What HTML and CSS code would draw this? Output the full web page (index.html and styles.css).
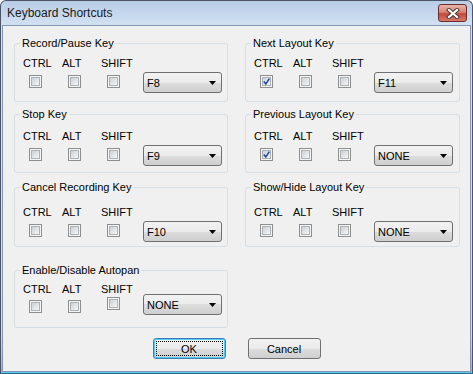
FILE: index.html
```html
<!DOCTYPE html>
<html lang="en">
<head>
    <meta charset="UTF-8">
    <title>Keyboard Shortcuts</title>
    <link rel="stylesheet" href="styles.css">
</head>
<body>
    <div class="window">
        <div class="titlebar">
            <span class="title">Keyboard Shortcuts</span>
            <div class="close">
                <svg width="14" height="11" viewBox="0 0 14 11">
                    <path d="M3 2 L11 9 M11 2 L3 9" stroke="#4d3a3a" stroke-width="4.2" stroke-linecap="square" fill="none"/>
                    <path d="M3 2 L11 9 M11 2 L3 9" stroke="#ffffff" stroke-width="2.2" stroke-linecap="square" fill="none"/>
                </svg>
            </div>
        </div>

        <div class="client">
            <div class="groups">
                <fieldset class="group">
                    <legend>Record/Pause Key</legend>
                    <div class="row">
                        <div class="key"><span>CTRL</span><span class="box"><span class="fill"></span></span></div>
                        <div class="key"><span>ALT</span><span class="box"><span class="fill"></span></span></div>
                        <div class="key"><span>SHIFT</span><span class="box"><span class="fill"></span></span></div>
                        <div class="select"><span>F8</span><svg width="7" height="4"><polygon points="0,0 7,0 3.5,4" fill="#000"/></svg></div>
                    </div>
                </fieldset>

                <fieldset class="group">
                    <legend>Next Layout Key</legend>
                    <div class="row">
                        <div class="key"><span>CTRL</span><span class="box"><span class="fill checked"><svg width="7" height="7"><path d="M0.8 3.6 L2.8 6 L6.4 0.6" stroke="#2c4a9a" stroke-width="1.6" fill="none"/></svg></span></span></div>
                        <div class="key"><span>ALT</span><span class="box"><span class="fill"></span></span></div>
                        <div class="key"><span>SHIFT</span><span class="box"><span class="fill"></span></span></div>
                        <div class="select"><span>F11</span><svg width="7" height="4"><polygon points="0,0 7,0 3.5,4" fill="#000"/></svg></div>
                    </div>
                </fieldset>

                <fieldset class="group second">
                    <legend>Stop Key</legend>
                    <div class="row">
                        <div class="key"><span>CTRL</span><span class="box"><span class="fill"></span></span></div>
                        <div class="key"><span>ALT</span><span class="box"><span class="fill"></span></span></div>
                        <div class="key"><span>SHIFT</span><span class="box"><span class="fill"></span></span></div>
                        <div class="select"><span>F9</span><svg width="7" height="4"><polygon points="0,0 7,0 3.5,4" fill="#000"/></svg></div>
                    </div>
                </fieldset>

                <fieldset class="group second">
                    <legend>Previous Layout Key</legend>
                    <div class="row">
                        <div class="key"><span>CTRL</span><span class="box"><span class="fill checked"><svg width="7" height="7"><path d="M0.8 3.6 L2.8 6 L6.4 0.6" stroke="#2c4a9a" stroke-width="1.6" fill="none"/></svg></span></span></div>
                        <div class="key"><span>ALT</span><span class="box"><span class="fill"></span></span></div>
                        <div class="key"><span>SHIFT</span><span class="box"><span class="fill"></span></span></div>
                        <div class="select"><span>NONE</span><svg width="7" height="4"><polygon points="0,0 7,0 3.5,4" fill="#000"/></svg></div>
                    </div>
                </fieldset>

                <fieldset class="group third">
                    <legend>Cancel Recording Key</legend>
                    <div class="row">
                        <div class="key"><span>CTRL</span><span class="box"><span class="fill"></span></span></div>
                        <div class="key"><span>ALT</span><span class="box"><span class="fill"></span></span></div>
                        <div class="key"><span>SHIFT</span><span class="box"><span class="fill"></span></span></div>
                        <div class="select"><span>F10</span><svg width="7" height="4"><polygon points="0,0 7,0 3.5,4" fill="#000"/></svg></div>
                    </div>
                </fieldset>

                <fieldset class="group third">
                    <legend>Show/Hide Layout Key</legend>
                    <div class="row">
                        <div class="key"><span>CTRL</span><span class="box"><span class="fill"></span></span></div>
                        <div class="key"><span>ALT</span><span class="box"><span class="fill"></span></span></div>
                        <div class="key"><span>SHIFT</span><span class="box"><span class="fill"></span></span></div>
                        <div class="select"><span>NONE</span><svg width="7" height="4"><polygon points="0,0 7,0 3.5,4" fill="#000"/></svg></div>
                    </div>
                </fieldset>

                <fieldset class="group fourth">
                    <legend>Enable/Disable Autopan</legend>
                    <div class="row">
                        <div class="key"><span>CTRL</span><span class="box"><span class="fill"></span></span></div>
                        <div class="key"><span>ALT</span><span class="box"><span class="fill"></span></span></div>
                        <div class="key"><span>SHIFT</span><span class="box up"><span class="fill"></span></span></div>
                        <div class="select"><span>NONE</span><svg width="7" height="4"><polygon points="0,0 7,0 3.5,4" fill="#000"/></svg></div>
                    </div>
                </fieldset>
            </div>

            <div class="buttons">
                <div class="btn default"><span>OK</span></div>
                <div class="btn"><span>Cancel</span></div>
            </div>
        </div>
    </div>
</body>
</html>
```

FILE: styles.css
```css
body {
    margin: 0;
    font-family: "Liberation Sans", Arial, sans-serif;
    font-size: 11px;
    color: #000;
}
.window {
    width: 473px;
    height: 374px;
    box-sizing: border-box;
    border: 1px solid #4b5566;
    border-bottom-color: #2f6d8c;
    border-radius: 6px 6px 0 0;
    background: linear-gradient(#b8cde7, #d2e1f2 24px, #cadcf0 90%, #5fc6e8);
    display: flex;
    flex-direction: column;
}
.titlebar {
    height: 24px;
    display: flex;
    justify-content: space-between;
    align-items: flex-start;
    padding: 0 5px 0 6px;
}
.title {
    font-size: 12px;
    line-height: 24px;
    color: #1a1a1a;
}
.close {
    margin-top: 3px;
    width: 29px;
    height: 18px;
    box-sizing: border-box;
    border: 1px solid #6e2b2b;
    border-radius: 3px;
    background: linear-gradient(#e9b4a8, #d98574 45%, #c4483c 55%, #d67b66);
    display: flex;
    align-items: center;
    justify-content: center;
}
.client {
    flex: 1;
    margin: 0 1px 1px 1px;
    border: 1px solid #8298b6;
    background: #f0f0f0;
}
.groups {
    display: grid;
    grid-template-columns: 214px 215px;
    grid-template-rows: 71px 73px 83px 64px;
    column-gap: 17px;
    padding: 11px 0 0 11px;
}
.group {
    margin: 0;
    padding: 8px 0 0 0;
    height: 65px;
    box-sizing: border-box;
    border: 1px solid #d5dfe5;
    border-radius: 3px;
    min-width: 0;
}
.group.second {
    padding-top: 10px;
}
.group.third {
    padding-top: 13px;
    height: 66px;
}
.group.fourth {
    padding-top: 7px;
    height: 64px;
}
.group legend {
    margin-left: 5px;
    padding: 0 2px;
    line-height: 12px;
}
.row {
    display: flex;
    align-items: flex-start;
    padding-left: 8px;
}
.key {
    width: 39px;
    display: flex;
    flex-direction: column;
    line-height: 13px;
}
.box {
    width: 13px;
    height: 13px;
    box-sizing: border-box;
    margin: 5px 0 0 6px;
    border: 1px solid #8e8f8f;
    background: #f4f4f4;
    padding: 1px;
}
.fourth .box {
    margin-top: 4px;
}
.fourth .box.up {
    margin-top: 1px;
}
.fill {
    display: flex;
    align-items: center;
    justify-content: center;
    width: 9px;
    height: 9px;
    box-sizing: border-box;
    border: 1px solid #adb2b5;
    background: linear-gradient(135deg, #cbcfd5, #f6f6f6);
}
.fill.checked {
    background: linear-gradient(135deg, #c7d2e6, #f4f6fa);
}
.fill svg {
    display: block;
    overflow: visible;
}
.select {
    width: 79px;
    height: 21px;
    box-sizing: border-box;
    margin: 15px 0 0 3px;
    border: 1px solid #707070;
    border-radius: 3px;
    background: linear-gradient(#f2f2f2, #ebebeb 50%, #dddddd 50%, #cfcfcf);
    display: flex;
    align-items: center;
    justify-content: space-between;
    padding: 0 5px 0 3px;
}
.fourth .select {
    margin-top: 11px;
}
.select svg {
    display: block;
}
.buttons {
    display: flex;
    justify-content: center;
    gap: 22px;
    margin-top: 10px;
}
.btn {
    width: 73px;
    height: 21px;
    box-sizing: border-box;
    border: 1px solid #707070;
    border-radius: 3px;
    background: linear-gradient(#f2f2f2, #ebebeb 50%, #dddddd 50%, #cfcfcf);
    padding: 2px;
    display: flex;
}
.btn span {
    flex: 1;
    display: flex;
    align-items: center;
    justify-content: center;
    border: 1px solid transparent;
}
.btn.default {
    border-color: #3c7fb1;
    box-shadow: inset 0 0 0 1px #4fcdf5;
}
.btn.default span {
    border: 1px dotted #000;
}
```
